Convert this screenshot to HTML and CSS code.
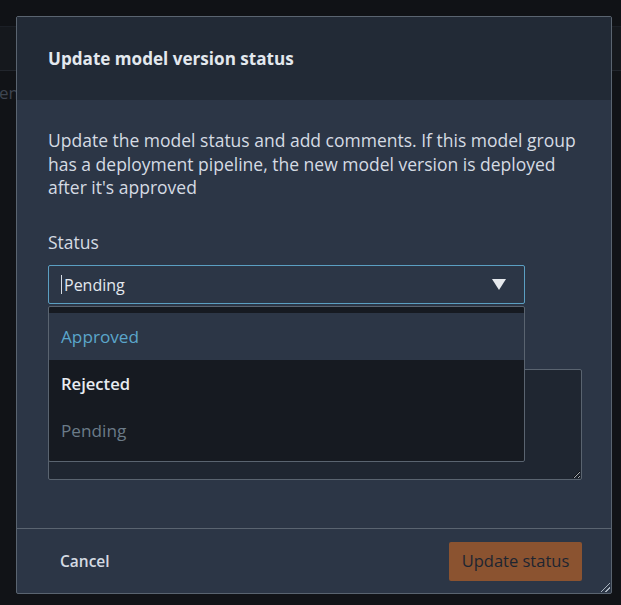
FILE: index.html
```html
<!DOCTYPE html>
<html lang="en">
<head>
<meta charset="utf-8">
<title>Update model version status</title>
<link rel="stylesheet" href="styles.css">
</head>
<body>
<div class="page">
  <div class="topbar"></div>
  <div class="toolbar"></div>
  <div class="tabrow"><span class="tab-label">en</span></div>
</div>

<div class="dialog" role="dialog" aria-labelledby="dlg-title">
  <div class="dialog-header">
    <h2 id="dlg-title" class="dialog-title">Update model version status</h2>
  </div>
  <div class="dialog-body">
    <p class="desc">Update the model status and add comments. If this model group has a deployment pipeline, the new model version is deployed after it's approved</p>
    <label class="field-label">Status</label>
    <div class="select-wrap">
      <div class="select">
        <span class="caret"></span><span class="select-value">Pending</span>
        <span class="arrow"></span>
      </div>
      <ul class="menu">
        <li class="option option-active">Approved</li>
        <li class="option option-strong">Rejected</li>
        <li class="option option-muted">Pending</li>
      </ul>
    </div>
    <label class="field-label field-label-hidden">Comments</label>
    <textarea class="comments" aria-label="Comments"></textarea>
  </div>
  <div class="dialog-footer">
    <button class="btn-cancel">Cancel</button>
    <button class="btn-primary">Update status</button>
  </div>
  <span class="resize-grip"></span>
</div>
</body>
</html>
```

FILE: styles.css
```css
* { box-sizing: border-box; }

html, body {
  margin: 0;
  padding: 0;
  height: 100%;
}

body {
  background: #111317;
  font-family: "Open Sans", "Noto Sans", sans-serif;
  color: #d5dbe3;
  overflow: hidden;
}

.page {
  display: flex;
  flex-direction: column;
}

.topbar {
  height: 27px;
  background: #101216;
  border-bottom: 1px solid #1b1f26;
}

.toolbar {
  height: 44px;
  background: #15181d;
  border-bottom: 1px solid #22262d;
}

.tabrow {
  height: 40px;
  display: flex;
  align-items: center;
  padding-top: 2px;
}

.tab-label {
  font-size: 17px;
  color: #3d4450;
  margin-left: -1px;
}

.dialog {
  position: absolute;
  left: 16px;
  top: 16px;
  width: 596px;
  height: 578px;
  border: 1px solid #5a6470;
  border-radius: 2px;
  background: #2c3646;
  display: flex;
  flex-direction: column;
}

.dialog-header {
  height: 83px;
  background: #222a36;
  display: flex;
  align-items: center;
  padding-left: 31px;
}

.dialog-title {
  margin: 0;
  font-size: 17.1px;
  font-weight: 700;
  color: #e3e8ee;
}

.dialog-body {
  flex: 1;
  display: flex;
  flex-direction: column;
  padding: 29px 29px 0 31px;
}

.desc {
  margin: 0;
  font-size: 17.5px;
  line-height: 23.5px;
  color: #d5dbe3;
}

.field-label {
  display: block;
  margin-top: 30px;
  font-size: 17.5px;
  line-height: 24px;
  color: #d5dbe3;
}

.field-label-hidden {
  margin-top: 29px;
  visibility: hidden;
}

.select-wrap {
  position: relative;
  margin-top: 11px;
  width: 477px;
}

.select {
  height: 39px;
  border: 1px solid #5b9fc2;
  border-radius: 2px;
  background: #2c3646;
  display: flex;
  align-items: center;
  padding-left: 12px;
  padding-right: 18px;
  padding-top: 1px;
}

.caret {
  width: 1px;
  height: 19px;
  background: #d5dbe3;
  margin-right: 2px;
}

.select-value {
  font-size: 16px;
  color: #e3e8ee;
  flex: 1;
}

.arrow {
  width: 0;
  height: 0;
  border-left: 7px solid transparent;
  border-right: 7px solid transparent;
  border-top: 11px solid #e6e9ed;
}

.menu {
  position: absolute;
  left: 0;
  top: 41px;
  width: 477px;
  margin: 0;
  padding: 6px 0 7px;
  list-style: none;
  background: #161a21;
  border: 1px solid #5a6470;
  border-radius: 2px;
  z-index: 2;
}

.option {
  height: 47px;
  display: flex;
  align-items: center;
  padding-left: 12px;
  font-size: 17.2px;
}

.option-active {
  background: #2c3646;
  color: #5ba6cb;
}

.option-strong {
  color: #e8ecf1;
  font-weight: 600;
  font-size: 16.6px;
}

.option-muted {
  color: #6b7b88;
}

.comments {
  margin-top: 12px;
  width: 534px;
  height: 111px;
  background: #1f2631;
  border: 1px solid #5a6470;
  border-radius: 2px;
  color: #d5dbe3;
  font-family: inherit;
  font-size: 16px;
  color-scheme: dark;
  resize: both;
}

.dialog-footer {
  height: 65px;
  border-top: 1px solid #5a6470;
  display: flex;
  align-items: center;
  justify-content: space-between;
  padding: 0 29px 0 31px;
}

.btn-cancel {
  background: transparent;
  border: 0;
  font-family: inherit;
  font-size: 15.5px;
  font-weight: 600;
  color: #d5dbe3;
  padding: 8px 12px;
}

.btn-primary {
  width: 133px;
  height: 39px;
  background: #8b5330;
  border: 0;
  border-radius: 2px;
  font-family: inherit;
  font-size: 16.5px;
  color: #1d2530;
  padding-bottom: 2px;
}

.resize-grip {
  position: absolute;
  right: 1px;
  bottom: 1px;
  width: 9px;
  height: 9px;
  background: linear-gradient(135deg, transparent 0 45%, #a8b2bd 45% 55%, transparent 55% 70%, #a8b2bd 70% 80%, transparent 80%);
}
```
